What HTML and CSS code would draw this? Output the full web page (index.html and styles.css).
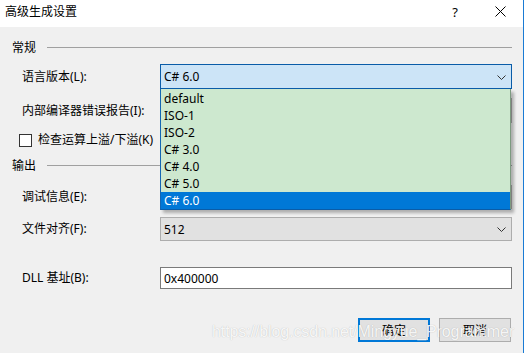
FILE: index.html
```html
<!DOCTYPE html>
<html lang="zh">
<head>
<meta charset="utf-8">
<title>高级生成设置</title>
<link rel="stylesheet" href="styles.css">
</head>
<body>
<div class="window">
  <div class="titlebar">
    <span class="title">高级生成设置</span>
    <span class="help">?</span>
    <span class="close"><svg width="11" height="11" viewBox="0 0 11 11"><path d="M0.5 0.5 L10.5 10.5 M10.5 0.5 L0.5 10.5" stroke="#000" stroke-width="1" fill="none"/></svg></span>
  </div>
  <div class="content">
    <div class="group-head g1"><span>常规</span><div class="rule"></div></div>
    <div class="row r1">
      <span class="label">语言版本(L):</span>
      <div class="combo focused"><span>C# 6.0</span><svg class="chev" width="9" height="5" viewBox="0 0 9 5"><path d="M0.5 0.5 L4.5 4.5 L8.5 0.5" stroke="#333" stroke-width="1" fill="none"/></svg></div>
    </div>
    <div class="row r2">
      <span class="label">内部编译器错误报告(I):</span>
      <div class="combo"></div>
    </div>
    <div class="row r3">
      <span class="check"></span><span class="check-label">检查运算上溢/下溢(K)</span>
    </div>
    <div class="group-head g2"><span>输出</span><div class="rule"></div></div>
    <div class="row r4">
      <span class="label">调试信息(E):</span>
      <div class="combo"></div>
    </div>
    <div class="row r5">
      <span class="label">文件对齐(F):</span>
      <div class="combo"><span>512</span><svg class="chev" width="9" height="5" viewBox="0 0 9 5"><path d="M0.5 0.5 L4.5 4.5 L8.5 0.5" stroke="#333" stroke-width="1" fill="none"/></svg></div>
    </div>
    <div class="row r6">
      <span class="label">DLL 基址(B):</span>
      <div class="textbox">0x400000</div>
    </div>
    <div class="buttons">
      <button class="btn default">确定</button>
      <button class="btn">取消</button>
    </div>

    <ul class="droplist">
      <li>default</li>
      <li>ISO-1</li>
      <li>ISO-2</li>
      <li>C# 3.0</li>
      <li>C# 4.0</li>
      <li>C# 5.0</li>
      <li class="selected">C# 6.0</li>
    </ul>
    <div class="watermark">https://blog.csdn.net/Mingyue_Programmer</div>
  </div>
</div>
</body>
</html>
```

FILE: styles.css
```css
html, body {
  margin: 0;
  padding: 0;
  background: #ffffff;
}
body {
  width: 525px;
  height: 353px;
  overflow: hidden;
  font-family: "Noto Sans", "Noto Sans CJK SC", sans-serif;
  font-size: 12px;
  color: #000;
}
.window {
  width: 523px;
  height: 353px;
  border-right: 1px solid #1a7bd4;
  background: #f0f0f0;
  display: flex;
  flex-direction: column;
}
.titlebar {
  height: 27px;
  flex: none;
  background: #ffffff;
  display: flex;
  align-items: center;
  padding-left: 5px;
}
.title {
  line-height: 16px;
  margin-top: -3px;
}
.help {
  margin-left: auto;
  width: 46px;
  text-align: center;
  font-size: 13px;
  margin-top: -4px;
}
.close {
  width: 45px;
  display: flex;
  justify-content: center;
  margin-top: -5px;
}
.content {
  position: relative;
  flex: 1;
  padding: 13px 11px 0 12px;
  display: flex;
  flex-direction: column;
}
.group-head {
  height: 16px;
  display: flex;
  align-items: center;
  flex: none;
}
.group-head span {
  line-height: 16px;
}
.rule {
  flex: 1;
  height: 1px;
  background: #a0a0a0;
  margin-left: 11px;
  margin-top: -1px;
}
.row {
  display: flex;
  align-items: center;
  flex: none;
  padding-left: 10px;
}
.label {
  width: 138px;
  line-height: 16px;
}
.r1 { height: 25px; margin-top: 8px; }
.r2 { height: 25px; margin-top: 9px; }
.r3 { height: 18px; margin-top: 8px; padding-left: 7px; }
.g2 { margin-top: 9px; }
.r4 { height: 24px; margin-top: 11px; }
.r5 { height: 24px; margin-top: 8px; }
.r6 { height: 22px; margin-top: 26px; }
.combo {
  flex: 1;
  align-self: stretch;
  box-sizing: border-box;
  border: 1px solid #adadad;
  background: #e1e1e1;
  display: flex;
  align-items: center;
  padding: 0 5px 0 3px;
}
.combo span {
  flex: 1;
}
.combo.focused {
  border-color: #0a5ca8;
  background: #cce4f7;
}
.chev {
  margin-right: 0px;
  margin-top: 1px;
}
.check {
  width: 13px;
  height: 13px;
  box-sizing: border-box;
  border: 1px solid #333333;
  background: #ffffff;
  margin-right: 6px;
}
.check-label {
  line-height: 16px;
}
.textbox {
  flex: 1;
  align-self: stretch;
  box-sizing: border-box;
  border: 1px solid #7a7a7a;
  background: #ffffff;
  display: flex;
  align-items: center;
  padding: 0 3px;
}
.buttons {
  display: flex;
  justify-content: flex-end;
  gap: 9px;
  margin-top: 29px;
  padding-right: 1px;
}
.btn {
  width: 72px;
  height: 24px;
  box-sizing: border-box;
  border: 1px solid #adadad;
  background: #e1e1e1;
  font-family: "Noto Sans", "Noto Sans CJK SC", sans-serif;
  font-size: 12px;
  color: #000;
  padding: 0;
  margin: 0;
}
.btn.default {
  border: 2px solid #0078d7;
}
.droplist {
  position: absolute;
  left: 160px;
  top: 62px;
  width: 351px;
  box-sizing: border-box;
  margin: 0;
  padding: 1px 0 0 0;
  list-style: none;
  background: #cde8cf;
  border-left: 1px solid #1366b3;
  border-right: 1px solid #7d9a80;
  border-bottom: 1px solid #0a5ca8;
  box-shadow: 3px 3px 3px rgba(0, 0, 0, 0.28);
  z-index: 2;
}
.droplist li {
  height: 17px;
  line-height: 17px;
  padding-left: 3px;
}
.droplist li.selected {
  background: #0078d7;
  color: #ffffff;
}
.watermark {
  position: absolute;
  left: 212px;
  top: 296px;
  font-family: "Liberation Sans", Arial, sans-serif;
  font-size: 16px;
  color: rgba(255, 255, 255, 0.9);
  text-shadow: 0 0 1px rgba(0, 0, 0, 0.25);
  white-space: nowrap;
  z-index: 3;
  letter-spacing: -0.1px;
}
```
